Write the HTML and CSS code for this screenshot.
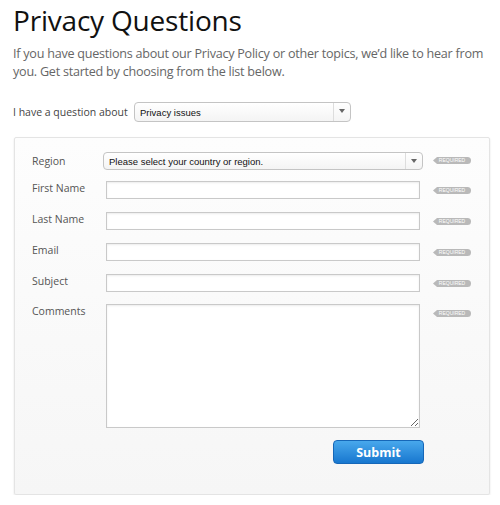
FILE: index.html
```html
<!DOCTYPE html>
<html lang="en">
<head>
    <meta charset="UTF-8">
    <meta name="viewport" content="width=device-width, initial-scale=1.0">
    <title>Privacy Questions</title>
    <link rel="stylesheet" href="styles.css">
</head>
<body>
    <div class="page">
        <h1>Privacy Questions</h1>
        <p class="intro">If you have questions about our Privacy Policy or other topics, we’d like to hear from you. Get started by choosing from the list below.</p>

        <div class="topic">
            <label for="topic">I have a question about</label>
            <div class="select topic-select">
                <span>Privacy issues</span>
                <span class="arrow"></span>
            </div>
        </div>

        <div class="panel">
            <div class="row region-row">
                <label class="field-label">Region</label>
                <div class="select region-select">
                    <span>Please select your country or region.</span>
                    <span class="arrow"></span>
                </div>
                <span class="required">REQUIRED</span>
            </div>
            <div class="row">
                <label class="field-label" for="first_name">First Name</label>
                <input type="text" id="first_name" class="field">
                <span class="required">REQUIRED</span>
            </div>
            <div class="row">
                <label class="field-label" for="last_name">Last Name</label>
                <input type="text" id="last_name" class="field">
                <span class="required">REQUIRED</span>
            </div>
            <div class="row">
                <label class="field-label" for="email">Email</label>
                <input type="text" id="email" class="field">
                <span class="required">REQUIRED</span>
            </div>
            <div class="row subject-row">
                <label class="field-label" for="subject">Subject</label>
                <input type="text" id="subject" class="field">
                <span class="required">REQUIRED</span>
            </div>
            <div class="row">
                <label class="field-label" for="comments">Comments</label>
                <textarea id="comments" class="field comments"></textarea>
                <span class="required">REQUIRED</span>
            </div>
            <div class="actions">
                <button class="submit">Submit</button>
            </div>
        </div>
    </div>
</body>
</html>
```

FILE: styles.css
```css
body {
    font-family: "Open Sans", "Noto Sans", sans-serif;
    margin: 0;
    padding: 0;
    background-color: #fff;
}
.page {
    padding: 3px 0 0 13px;
}
h1 {
    font-size: 28px;
    font-weight: normal;
    color: #111;
    margin: 0;
    line-height: 34px;
    letter-spacing: -0.2px;
}
.intro {
    font-size: 12.6px;
    line-height: 18px;
    letter-spacing: -0.25px;
    color: #666;
    margin: 8px 0 0 0;
}
.topic {
    display: flex;
    align-items: center;
    margin-top: 21px;
    font-size: 10.5px;
    color: #444;
}
.topic label {
    width: 121px;
}
.select {
    display: flex;
    align-items: center;
    height: 18px;
    border: 1px solid #c4c4c4;
    border-radius: 4px;
    background: linear-gradient(#fff, #f4f4f4);
    font-family: "Liberation Sans", Arial, sans-serif;
    font-size: 9.5px;
    color: #111;
    box-sizing: border-box;
}
.select span:first-child {
    flex: 1;
    padding-left: 5px;
}
.select .arrow {
    width: 16px;
    height: 100%;
    border-left: 1px solid #ddd;
    position: relative;
}
.select .arrow::after {
    content: "";
    position: absolute;
    left: 5px;
    top: 6px;
    border-left: 3px solid transparent;
    border-right: 3px solid transparent;
    border-top: 4px solid #666;
}
.topic-select {
    width: 217px;
    height: 20px;
}
.panel {
    margin-top: 15px;
    width: 476px;
    box-sizing: border-box;
    margin-left: 1px;
    padding: 14px 0 30px 17px;
    border: 1px solid #e4e4e4;
    border-radius: 2px;
    background: linear-gradient(#fdfdfd, #f6f6f6);
    box-shadow: 0 1px 2px rgba(0, 0, 0, 0.12);
}
.row {
    display: flex;
    align-items: flex-start;
    margin-bottom: 13px;
}
.region-row {
    margin-bottom: 11px;
}
.subject-row {
    margin-bottom: 12px;
}
.field-label {
    width: 71px;
    font-size: 10.5px;
    color: #555;
    line-height: 14px;
}
.region-row .field-label {
    padding-top: 2px;
}
.region-select {
    width: 320px;
}
.region-select + .required {
    margin-top: 5px;
}
.field {
    width: 314px;
    height: 18px;
    margin: 0 3px;
    padding: 0 4px;
    border: 1px solid #c9c9c9;
    box-shadow: inset 0 1px 2px rgba(0, 0, 0, 0.08);
    background-color: #fff;
    box-sizing: border-box;
    font-size: 11px;
}
.comments {
    height: 124px;
    resize: both;
}
.required {
    margin-left: 10px;
    margin-top: 6px;
    width: 38px;
    height: 7px;
    background-color: #b9b9b9;
    color: #fff;
    font-family: "Liberation Sans", Arial, sans-serif;
    font-size: 5px;
    line-height: 7px;
    text-align: center;
    border-radius: 0 4px 4px 0;
    clip-path: polygon(4px 0, 100% 0, 100% 100%, 4px 100%, 0 50%);
}
.actions {
    display: flex;
    padding-left: 301px;
    margin-top: -1px;
}
.submit {
    width: 91px;
    height: 24px;
    border: 1px solid #1667b8;
    border-radius: 4px;
    background: linear-gradient(#48a8ec, #1877cf);
    color: #fff;
    font-family: "Open Sans", sans-serif;
    font-weight: bold;
    font-size: 12.5px;
    cursor: pointer;
}
```
